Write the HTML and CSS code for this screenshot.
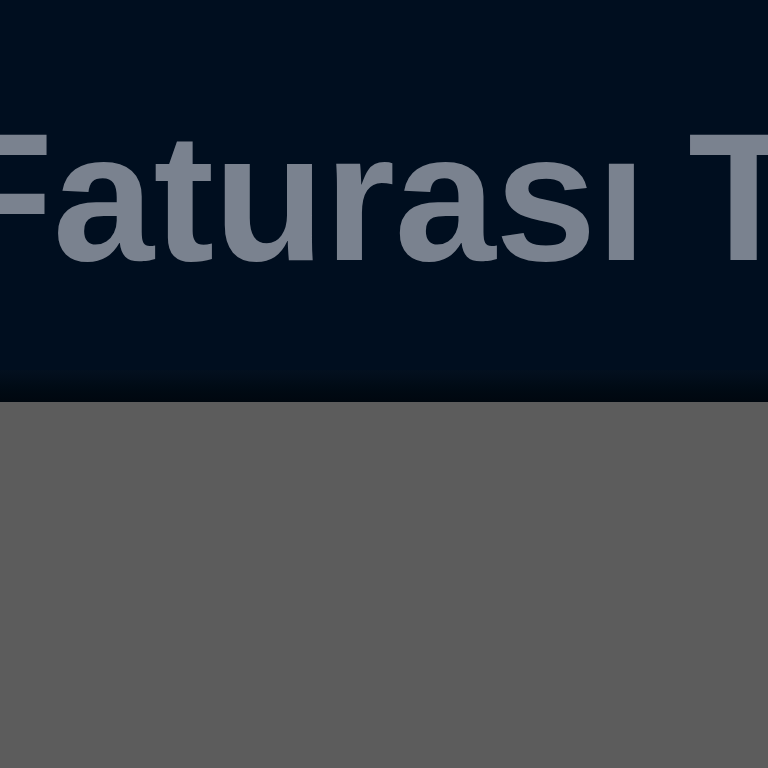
FILE: index.html
```html
<!DOCTYPE html>
<html lang="tr">
<head>
<meta charset="utf-8">
<link rel="stylesheet" href="styles.css">
</head>
<body>
<header class="hero">
  <h1 class="title">Faturası Takibi</h1>
  <div class="hero-edge"></div>
</header>
<main class="backdrop"></main>
</body>
</html>
```
FILE: styles.css
```css
html, body {
  margin: 0;
  padding: 0;
  width: 768px;
  height: 768px;
  overflow: hidden;
  background: #5c5c5c;
}
.hero {
  background: #000e1f;
  height: 402px;
  display: flex;
  flex-direction: column;
  overflow: hidden;
}
.title {
  margin: 0 0 0 -58px;
  padding-top: 106px;
  font-family: "Liberation Sans", Arial, sans-serif;
  font-weight: 700;
  font-size: 182px;
  line-height: 1;
  letter-spacing: -0.5px;
  word-spacing: -8px;
  color: #7a828f;
  white-space: nowrap;
  flex: 1;
}
.hero-edge {
  height: 32px;
  background: linear-gradient(#03101f, #000a14 60%, #00070f);
}
.backdrop {
  height: 366px;
  background: #5c5c5c;
}
```
